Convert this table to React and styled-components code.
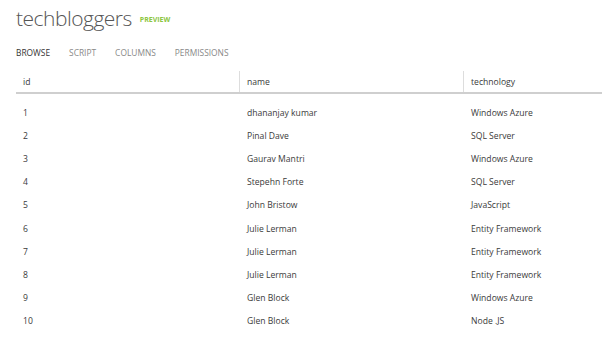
import styled, { createGlobalStyle } from "styled-components";

const Global = createGlobalStyle`
    body {
        margin: 0;
        background: #fff;
        font-family: "Open Sans", "Noto Sans", sans-serif;
        color: #333;
    }
`

const Page = styled.div`
    width: 602px;
    height: 358px;
    overflow: hidden;
    padding: 0 0 0 16px;
    box-sizing: border-box;
`
const Titulo = styled.div`
    display: flex;
    align-items: baseline;
    height: 38px;
    padding-top: 4px;
    box-sizing: border-box;

    h1 {
        margin: 0;
        font-size: 21px;
        font-weight: 300;
        color: #555;
        letter-spacing: -0.5px;
    }

    span {
        margin-left: 8px;
        font-size: 7px;
        font-weight: 700;
        color: #8cc63f;
        position: relative;
        top: -4px;
    }
`
const Pestanas = styled.nav`
    display: flex;
    gap: 19px;
    height: 36px;
    align-items: center;
    margin-top: -4px;
`
const Pestana = styled.span`
    font-size: 8.4px;
    color: ${(p) => (p.$activa ? "#333" : "#888")};
    text-transform: uppercase;
`
const Tabla = styled.div`
    margin-top: 1px;
`
const Cabecera = styled.div`
    display: grid;
    grid-template-columns: 224px 224px 1fr;
    border-bottom: 2px solid #cfcfcf;
    height: 21px;
`
const Celda = styled.div`
    font-size: 8.6px;
    color: #3a3a3a;
    padding-left: 7px;
    display: flex;
    align-items: center;
    border-left: ${(p) => (p.$borde ? "1px solid #ddd" : "none")};
    margin-left: ${(p) => (p.$borde ? "-1px" : "0")};
`
const Fila = styled.div`
    display: grid;
    grid-template-columns: 224px 224px 1fr;
    height: 23.2px;
`
const Cuerpo = styled.div`
    padding-top: 7px;
`

const datos = [
    ["1", "dhananjay kumar", "Windows Azure"],
    ["2", "Pinal Dave", "SQL Server"],
    ["3", "Gaurav Mantri", "Windows Azure"],
    ["4", "Stepehn Forte", "SQL Server"],
    ["5", "John Bristow", "JavaScript"],
    ["6", "Julie Lerman", "Entity Framework"],
    ["7", "Julie Lerman", "Entity Framework"],
    ["8", "Julie Lerman", "Entity Framework"],
    ["9", "Glen Block", "Windows Azure"],
    ["10", "Glen Block", "Node .JS"],
]

const App = () => {
    return (
        <Page>
            <Global />
            <Titulo>
                <h1>techbloggers</h1>
                <span>PREVIEW</span>
            </Titulo>
            <Pestanas>
                <Pestana $activa>Browse</Pestana>
                <Pestana>Script</Pestana>
                <Pestana>Columns</Pestana>
                <Pestana>Permissions</Pestana>
            </Pestanas>
            <Tabla>
                <Cabecera>
                    <Celda>id</Celda>
                    <Celda $borde>name</Celda>
                    <Celda $borde>technology</Celda>
                </Cabecera>
                <Cuerpo>
                    {datos.map((fila, index) => (
                        <Fila key={index}>
                            {fila.map((valor, i) => (
                                <Celda key={i}>{valor}</Celda>
                            ))}
                        </Fila>
                    ))}
                </Cuerpo>
            </Tabla>
        </Page>
    )
}

export default App;
